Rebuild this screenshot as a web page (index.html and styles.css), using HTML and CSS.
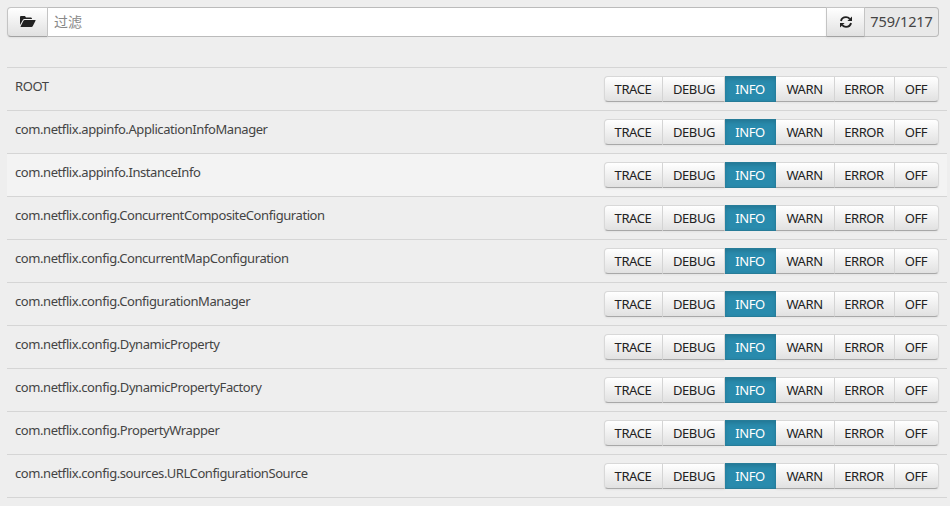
FILE: index.html
```html
<!DOCTYPE html>
<html lang="zh-CN">
<head>
<meta charset="utf-8">
<title>Loggers</title>
<link rel="stylesheet" href="styles.css">
</head>
<body>
<div class="toolbar">
  <button class="tool folder" aria-label="Open"><svg width="16" height="12" viewBox="0 0 16 12"><path fill="#222" d="M0 9V1Q0 0 1 0H5L6 1.5H11Q12 1.5 12 3H4.5Q3.5 3 2.8 4Z"/><path fill="#222" d="M4.6 4H15.3Q15.8 4 15.5 4.8L12.7 10.2Q12.3 11 11.5 11H.8Q.3 11 .7 10.2L3.6 4.6Q4 4 4.6 4Z"/></svg></button>
  <input class="filter" placeholder="过滤">
  <button class="tool refresh" aria-label="Refresh"><svg width="12" height="12" viewBox="0 0 12 12"><path fill="none" stroke="#222" stroke-width="1.9" d="M1 5Q1.8 1.1 6 1.1Q8.2 1.1 9.8 2.8M11 7Q10.2 10.9 6 10.9Q3.8 10.9 2.2 9.2"/><path fill="#222" d="M12 .4V5H7.4ZM0 11.6V7H4.6Z"/></svg></button>
  <span class="count">759/1217</span>
</div>
<div class="loggers" id="loggers"></div>
<script src="app.js"></script>
</body>
</html>
```
FILE: styles.css
```css
* { box-sizing: border-box; }
body {
  margin: 0;
  padding: 7px 3px 0 7px;
  height: 506px;
  overflow: hidden;
  background: #eee;
  color: #444;
  font-family: "Noto Sans", "Noto Sans CJK SC", sans-serif;
  font-size: 13px;
}
button { font: inherit; margin: 0; }
.toolbar { display: flex; width: 932px; height: 30px; }
.tool {
  display: flex;
  align-items: center;
  justify-content: center;
  padding: 0;
  border: 1px solid #c4c4c4;
  border-bottom-color: #a2a2a2;
  background: linear-gradient(#fff, #e1e1e1);
  box-shadow: 0 1px 2px rgba(0, 0, 0, .06);
}
.folder { width: 41px; border-radius: 4px 0 0 4px; }
.filter {
  flex: 1;
  min-width: 0;
  padding: 0 6px 2px;
  border: 1px solid #bbb;
  border-width: 1px 0;
  border-radius: 0;
  background: #fff;
  font: 14px "Noto Sans CJK SC", sans-serif;
}
.filter::placeholder { color: #888; }
.refresh { width: 39px; }
.count {
  width: 74px;
  border: 1px solid #bbb;
  border-left: 0;
  border-radius: 0 4px 4px 0;
  background: #e9e9e9;
  font-size: 14.5px;
  letter-spacing: -.15px;
  line-height: 27px;
  text-align: center;
}
.loggers { margin-top: 30px; border-bottom: 1px solid #d5d5d5; }
.row {
  display: flex;
  justify-content: space-between;
  height: 43px;
  padding: 8px 8px 0;
  border-top: 1px solid #d5d5d5;
}
.row.hover { background: #f3f3f3; }
.name { line-height: 20px; letter-spacing: -.42px; white-space: nowrap; }
.levels {
  display: grid;
  grid-template-columns: 59px 62px 51px 59px 60px 44px;
  height: 26px;
}
.level {
  padding: 0 1px 0 0;
  border: 1px solid #d8d8d8;
  border-width: 1px 1px 1px 0;
  border-bottom-color: #a8a8a8;
  background: linear-gradient(#fff, #e1e1e1);
  box-shadow: 0 1px 2px rgba(0, 0, 0, .05);
  color: #222;
  line-height: 24px;
  letter-spacing: -.4px;
}
.level:first-child { border-left-width: 1px; border-radius: 4px 0 0 4px; }
.level:nth-child(2) { padding: 0 0 0 1px; }
.level:last-child { border-radius: 0 4px 4px 0; }
.level.active {
  border-color: #277c98;
  border-right-width: 0;
  background: #298bad;
  box-shadow: inset 0 2px 4px rgba(0, 0, 0, .15);
  color: #fff;
}
```
FILE: app.js
```js
const names = [
  "ROOT",
  "com.netflix.appinfo.ApplicationInfoManager",
  "com.netflix.appinfo.InstanceInfo",
  "com.netflix.config.ConcurrentCompositeConfiguration",
  "com.netflix.config.ConcurrentMapConfiguration",
  "com.netflix.config.ConfigurationManager",
  "com.netflix.config.DynamicProperty",
  "com.netflix.config.DynamicPropertyFactory",
  "com.netflix.config.PropertyWrapper",
  "com.netflix.config.sources.URLConfigurationSource"
];
const levels = ["TRACE", "DEBUG", "INFO", "WARN", "ERROR", "OFF"];
document.getElementById("loggers").innerHTML = names.map((name, i) =>
  `<div class="row${i === 2 ? " hover" : ""}"><span class="name">${name}</span><div class="levels">${
    levels.map(l => `<button class="level${l === "INFO" ? " active" : ""}">${l}</button>`).join("")
  }</div></div>`).join("");
```
